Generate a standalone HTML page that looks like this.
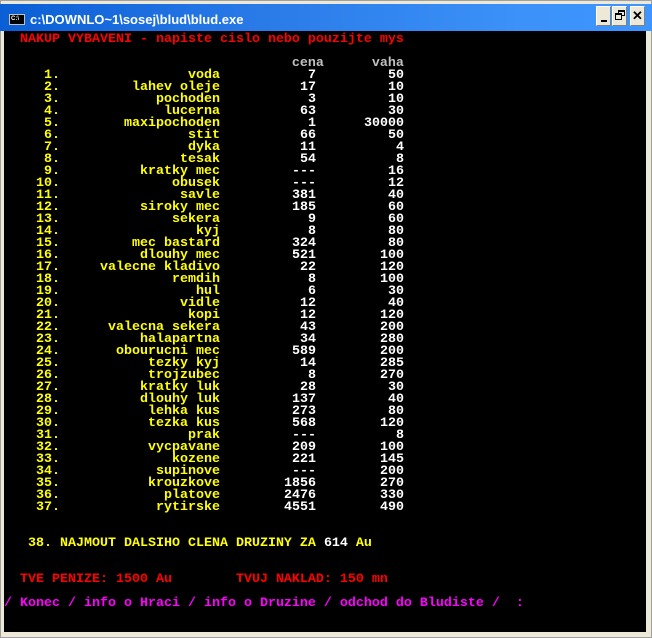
<!DOCTYPE html>
<html><head><meta charset="utf-8"><style>
*{margin:0;padding:0;box-sizing:border-box}
body{width:652px;height:638px;background:#d4d0c8;position:relative;overflow:hidden;font-family:"Liberation Mono",monospace}
#frame{position:absolute;left:0;top:0;width:652px;height:638px;background:#ece9d8;border:1px solid #a0a0a0}
#tb{position:absolute;left:0;top:4px;width:652px;height:27px;background:linear-gradient(90deg,#0a5fd6 0%,#2a7ae8 40%,#3c92f8 80%,#3d95ff 100%)}
#title{position:absolute;left:30px;top:8px;color:#fff;font:bold 13px "Liberation Sans",sans-serif;letter-spacing:0}
#ico{position:absolute;left:9px;top:10px;width:16px;height:11px;background:#000;border:1px solid #c0c0c0;color:#fff;font:bold 6px "Liberation Sans",sans-serif;line-height:9px;padding-left:1px}
.btn{position:absolute;top:6px;width:15px;height:20px;background:#ece9d8;border:1px solid #fff;border-right-color:#808080;border-bottom-color:#808080}
#con{position:absolute;left:4px;top:31px;width:642px;height:601px;background:#000}
.r{position:absolute;left:0;margin-top:3px;height:12px;line-height:12px;font-size:13.33px;font-weight:bold;white-space:pre}
.r span{display:inline-block;text-align:right}
.n{width:56px}.m{width:160px}.c{width:96px}.v{width:88px}
.y{color:#ffff00}.w{color:#fff}.g{color:#c0c0c0}.red{color:#ff0000}.mg{color:#ff00ff}
</style></head><body>
<div id="frame"></div>
<div id="tb">
<div id="ico">C:\</div>
<div id="title">c:\DOWNLO~1\sosej\blud\blud.exe</div>
</div>
<div class="btn" style="left:596px"><div style="position:absolute;left:4px;top:13px;width:6px;height:2px;background:#000"></div></div>
<div class="btn" style="left:612px"><div style="position:absolute;left:5px;top:3px;width:7px;height:6px;border:1px solid #000;border-top-width:2px"></div><div style="position:absolute;left:2px;top:6px;width:7px;height:7px;border:1px solid #000;border-top-width:2px;background:#ece9d8"></div></div>
<div class="btn" style="left:630px;font:bold 13px 'Liberation Sans',sans-serif;text-align:center;line-height:17px">✕</div>
<div id="con">
<div class="r red" style="top:0">  NAKUP VYBAVENI - napiste cislo nebo pouzijte mys</div>
<div class="r g" style="top:24px">                                    cena      vaha</div>
<div class="r" style="top:36px"><span class="n y">1.</span><span class="m y">voda</span><span class="c w">7</span><span class="v w">50</span></div>
<div class="r" style="top:48px"><span class="n y">2.</span><span class="m y">lahev oleje</span><span class="c w">17</span><span class="v w">10</span></div>
<div class="r" style="top:60px"><span class="n y">3.</span><span class="m y">pochoden</span><span class="c w">3</span><span class="v w">10</span></div>
<div class="r" style="top:72px"><span class="n y">4.</span><span class="m y">lucerna</span><span class="c w">63</span><span class="v w">30</span></div>
<div class="r" style="top:84px"><span class="n y">5.</span><span class="m y">maxipochoden</span><span class="c w">1</span><span class="v w">30000</span></div>
<div class="r" style="top:96px"><span class="n y">6.</span><span class="m y">stit</span><span class="c w">66</span><span class="v w">50</span></div>
<div class="r" style="top:108px"><span class="n y">7.</span><span class="m y">dyka</span><span class="c w">11</span><span class="v w">4</span></div>
<div class="r" style="top:120px"><span class="n y">8.</span><span class="m y">tesak</span><span class="c w">54</span><span class="v w">8</span></div>
<div class="r" style="top:132px"><span class="n y">9.</span><span class="m y">kratky mec</span><span class="c w">---</span><span class="v w">16</span></div>
<div class="r" style="top:144px"><span class="n y">10.</span><span class="m y">obusek</span><span class="c w">---</span><span class="v w">12</span></div>
<div class="r" style="top:156px"><span class="n y">11.</span><span class="m y">savle</span><span class="c w">381</span><span class="v w">40</span></div>
<div class="r" style="top:168px"><span class="n y">12.</span><span class="m y">siroky mec</span><span class="c w">185</span><span class="v w">60</span></div>
<div class="r" style="top:180px"><span class="n y">13.</span><span class="m y">sekera</span><span class="c w">9</span><span class="v w">60</span></div>
<div class="r" style="top:192px"><span class="n y">14.</span><span class="m y">kyj</span><span class="c w">8</span><span class="v w">80</span></div>
<div class="r" style="top:204px"><span class="n y">15.</span><span class="m y">mec bastard</span><span class="c w">324</span><span class="v w">80</span></div>
<div class="r" style="top:216px"><span class="n y">16.</span><span class="m y">dlouhy mec</span><span class="c w">521</span><span class="v w">100</span></div>
<div class="r" style="top:228px"><span class="n y">17.</span><span class="m y">valecne kladivo</span><span class="c w">22</span><span class="v w">120</span></div>
<div class="r" style="top:240px"><span class="n y">18.</span><span class="m y">remdih</span><span class="c w">8</span><span class="v w">100</span></div>
<div class="r" style="top:252px"><span class="n y">19.</span><span class="m y">hul</span><span class="c w">6</span><span class="v w">30</span></div>
<div class="r" style="top:264px"><span class="n y">20.</span><span class="m y">vidle</span><span class="c w">12</span><span class="v w">40</span></div>
<div class="r" style="top:276px"><span class="n y">21.</span><span class="m y">kopi</span><span class="c w">12</span><span class="v w">120</span></div>
<div class="r" style="top:288px"><span class="n y">22.</span><span class="m y">valecna sekera</span><span class="c w">43</span><span class="v w">200</span></div>
<div class="r" style="top:300px"><span class="n y">23.</span><span class="m y">halapartna</span><span class="c w">34</span><span class="v w">280</span></div>
<div class="r" style="top:312px"><span class="n y">24.</span><span class="m y">obourucni mec</span><span class="c w">589</span><span class="v w">200</span></div>
<div class="r" style="top:324px"><span class="n y">25.</span><span class="m y">tezky kyj</span><span class="c w">14</span><span class="v w">285</span></div>
<div class="r" style="top:336px"><span class="n y">26.</span><span class="m y">trojzubec</span><span class="c w">8</span><span class="v w">270</span></div>
<div class="r" style="top:348px"><span class="n y">27.</span><span class="m y">kratky luk</span><span class="c w">28</span><span class="v w">30</span></div>
<div class="r" style="top:360px"><span class="n y">28.</span><span class="m y">dlouhy luk</span><span class="c w">137</span><span class="v w">40</span></div>
<div class="r" style="top:372px"><span class="n y">29.</span><span class="m y">lehka kus</span><span class="c w">273</span><span class="v w">80</span></div>
<div class="r" style="top:384px"><span class="n y">30.</span><span class="m y">tezka kus</span><span class="c w">568</span><span class="v w">120</span></div>
<div class="r" style="top:396px"><span class="n y">31.</span><span class="m y">prak</span><span class="c w">---</span><span class="v w">8</span></div>
<div class="r" style="top:408px"><span class="n y">32.</span><span class="m y">vycpavane</span><span class="c w">209</span><span class="v w">100</span></div>
<div class="r" style="top:420px"><span class="n y">33.</span><span class="m y">kozene</span><span class="c w">221</span><span class="v w">145</span></div>
<div class="r" style="top:432px"><span class="n y">34.</span><span class="m y">supinove</span><span class="c w">---</span><span class="v w">200</span></div>
<div class="r" style="top:444px"><span class="n y">35.</span><span class="m y">krouzkove</span><span class="c w">1856</span><span class="v w">270</span></div>
<div class="r" style="top:456px"><span class="n y">36.</span><span class="m y">platove</span><span class="c w">2476</span><span class="v w">330</span></div>
<div class="r" style="top:468px"><span class="n y">37.</span><span class="m y">rytirske</span><span class="c w">4551</span><span class="v w">490</span></div>
<div class="r y" style="top:504px">   38. NAJMOUT DALSIHO CLENA DRUZINY ZA <b class="w">614</b> Au</div>
<div class="r red" style="top:540px">  TVE PENIZE: 1500 Au        TVUJ NAKLAD: 150 mn</div>
<div class="r mg" style="top:564px">/ Konec / info o Hraci / info o Druzine / odchod do Bludiste /  :</div>
</div>
</body></html>
